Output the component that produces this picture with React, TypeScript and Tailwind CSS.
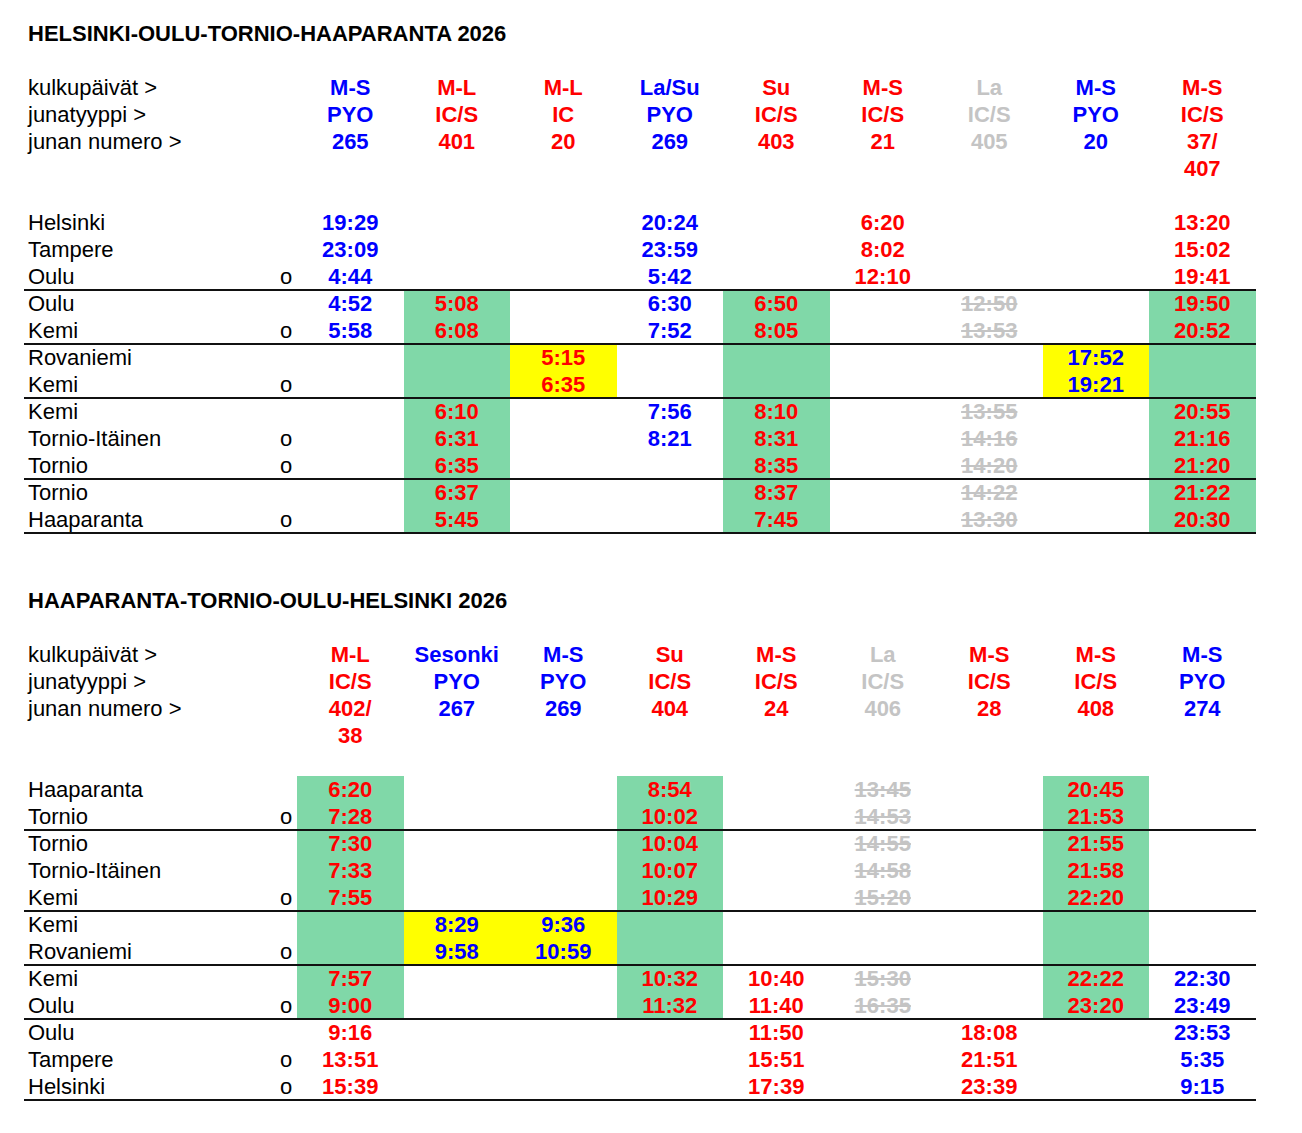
import React from 'react';

type Color = 'r' | 'b' | 'g';

const COLS = 'grid grid-cols-[251px_22px_repeat(9,106.5px)]';

const colorClass: Record<Color, string> = {
  r: 'text-[#ff0000]',
  b: 'text-[#0000ff]',
  g: 'text-[#c4c4c4]',
};

type BodyRow = {
  label: string;
  o?: boolean;
  vals: string[];
  bg?: string;
  line?: boolean;
};

type Section = {
  title: string;
  colors: Color[];
  header: string[][];
  body: BodyRow[];
};

const E = ['', '', '', '', '', '', '', '', ''];

const sections: Section[] = [
  {
    title: 'HELSINKI-OULU-TORNIO-HAAPARANTA 2026',
    colors: ['b', 'r', 'r', 'b', 'r', 'r', 'g', 'b', 'r'],
    header: [
      ['M-S', 'M-L', 'M-L', 'La/Su', 'Su', 'M-S', 'La', 'M-S', 'M-S'],
      ['PYO', 'IC/S', 'IC', 'PYO', 'IC/S', 'IC/S', 'IC/S', 'PYO', 'IC/S'],
      ['265', '401', '20', '269', '403', '21', '405', '20', '37/'],
      ['', '', '', '', '', '', '', '', '407'],
    ],
    body: [
      { label: 'Helsinki', vals: ['19:29', '', '', '20:24', '', '6:20', '', '', '13:20'] },
      { label: 'Tampere', vals: ['23:09', '', '', '23:59', '', '8:02', '', '', '15:02'] },
      { label: 'Oulu', o: true, vals: ['4:44', '', '', '5:42', '', '12:10', '', '', '19:41'] },
      { label: 'Oulu', line: true, bg: '.g..g...g', vals: ['4:52', '5:08', '', '6:30', '6:50', '', '12:50', '', '19:50'] },
      { label: 'Kemi', o: true, bg: '.g..g...g', vals: ['5:58', '6:08', '', '7:52', '8:05', '', '13:53', '', '20:52'] },
      { label: 'Rovaniemi', line: true, bg: '.gy.g..yg', vals: ['', '', '5:15', '', '', '', '', '17:52', ''] },
      { label: 'Kemi', o: true, bg: '.gy.g..yg', vals: ['', '', '6:35', '', '', '', '', '19:21', ''] },
      { label: 'Kemi', line: true, bg: '.g..g...g', vals: ['', '6:10', '', '7:56', '8:10', '', '13:55', '', '20:55'] },
      { label: 'Tornio-Itäinen', o: true, bg: '.g..g...g', vals: ['', '6:31', '', '8:21', '8:31', '', '14:16', '', '21:16'] },
      { label: 'Tornio', o: true, bg: '.g..g...g', vals: ['', '6:35', '', '', '8:35', '', '14:20', '', '21:20'] },
      { label: 'Tornio', line: true, bg: '.g..g...g', vals: ['', '6:37', '', '', '8:37', '', '14:22', '', '21:22'] },
      { label: 'Haaparanta', o: true, bg: '.g..g...g', vals: ['', '5:45', '', '', '7:45', '', '13:30', '', '20:30'] },
    ],
  },
  {
    title: 'HAAPARANTA-TORNIO-OULU-HELSINKI 2026',
    colors: ['r', 'b', 'b', 'r', 'r', 'g', 'r', 'r', 'b'],
    header: [
      ['M-L', 'Sesonki', 'M-S', 'Su', 'M-S', 'La', 'M-S', 'M-S', 'M-S'],
      ['IC/S', 'PYO', 'PYO', 'IC/S', 'IC/S', 'IC/S', 'IC/S', 'IC/S', 'PYO'],
      ['402/', '267', '269', '404', '24', '406', '28', '408', '274'],
      ['38', '', '', '', '', '', '', '', ''],
    ],
    body: [
      { label: 'Haaparanta', bg: 'g..g...g.', vals: ['6:20', '', '', '8:54', '', '13:45', '', '20:45', ''] },
      { label: 'Tornio', o: true, bg: 'g..g...g.', vals: ['7:28', '', '', '10:02', '', '14:53', '', '21:53', ''] },
      { label: 'Tornio', line: true, bg: 'g..g...g.', vals: ['7:30', '', '', '10:04', '', '14:55', '', '21:55', ''] },
      { label: 'Tornio-Itäinen', bg: 'g..g...g.', vals: ['7:33', '', '', '10:07', '', '14:58', '', '21:58', ''] },
      { label: 'Kemi', o: true, bg: 'g..g...g.', vals: ['7:55', '', '', '10:29', '', '15:20', '', '22:20', ''] },
      { label: 'Kemi', line: true, bg: 'gyyg...g.', vals: ['', '8:29', '9:36', '', '', '', '', '', ''] },
      { label: 'Rovaniemi', o: true, bg: 'gyyg...g.', vals: ['', '9:58', '10:59', '', '', '', '', '', ''] },
      { label: 'Kemi', line: true, bg: 'g..g...g.', vals: ['7:57', '', '', '10:32', '10:40', '15:30', '', '22:22', '22:30'] },
      { label: 'Oulu', o: true, bg: 'g..g...g.', vals: ['9:00', '', '', '11:32', '11:40', '16:35', '', '23:20', '23:49'] },
      { label: 'Oulu', line: true, vals: ['9:16', '', '', '', '11:50', '', '18:08', '', '23:53'] },
      { label: 'Tampere', o: true, vals: ['13:51', '', '', '', '15:51', '', '21:51', '', '5:35'] },
      { label: 'Helsinki', o: true, vals: ['15:39', '', '', '', '17:39', '', '23:39', '', '9:15'] },
    ],
  },
];

function Divider() {
  return <div className="relative z-10 -my-px h-[2px] w-full bg-[#111111]" />;
}

function Blank() {
  return <div className="h-[27px]" />;
}

function Row({
  label,
  o,
  vals,
  colors,
  bg,
  strike,
}: {
  label: string;
  o?: boolean;
  vals: string[];
  colors: Color[];
  bg?: string;
  strike?: boolean;
}) {
  return (
    <div className={`${COLS} h-[27px] text-[22px] leading-[27px]`}>
      <div className="whitespace-nowrap pl-[4px] text-black">{label}</div>
      <div className="text-center text-black">{o ? 'o' : ''}</div>
      {vals.map((v, i) => {
        const b = bg ? bg[i] : '.';
        const bgc = b === 'g' ? 'bg-[#80d8a8]' : b === 'y' ? 'bg-[#ffff00]' : '';
        const gray = colors[i] === 'g';
        return (
          <div
            key={i}
            className={`text-center font-bold ${colorClass[colors[i]]} ${bgc} ${gray && strike ? 'line-through' : ''}`}
          >
            {v}
          </div>
        );
      })}
    </div>
  );
}

function SectionView({ s }: { s: Section }) {
  const headerLabels = ['kulkupäivät >', 'junatyyppi >', 'junan numero >', ''];
  return (
    <div>
      <div className="h-[27px] pl-[4px] text-[22px] font-bold leading-[27px] text-black">{s.title}</div>
      <Blank />
      {s.header.map((h, i) => (
        <Row key={i} label={headerLabels[i]} vals={h} colors={s.colors} />
      ))}
      <Blank />
      {s.body.map((r, i) => (
        <React.Fragment key={i}>
          {r.line && <Divider />}
          <Row label={r.label} o={r.o} vals={r.vals} colors={s.colors} bg={r.bg} strike />
        </React.Fragment>
      ))}
      <Divider />
    </div>
  );
}

export default function App() {
  void E;
  return (
    <div className="min-h-screen bg-white pl-[24px] pt-[19.5px] font-['Liberation_Sans',Arial,sans-serif]">
      <div className="w-[1231.5px]">
        <SectionView s={sections[0]} />
        <Blank />
        <Blank />
        <SectionView s={sections[1]} />
      </div>
    </div>
  );
}
